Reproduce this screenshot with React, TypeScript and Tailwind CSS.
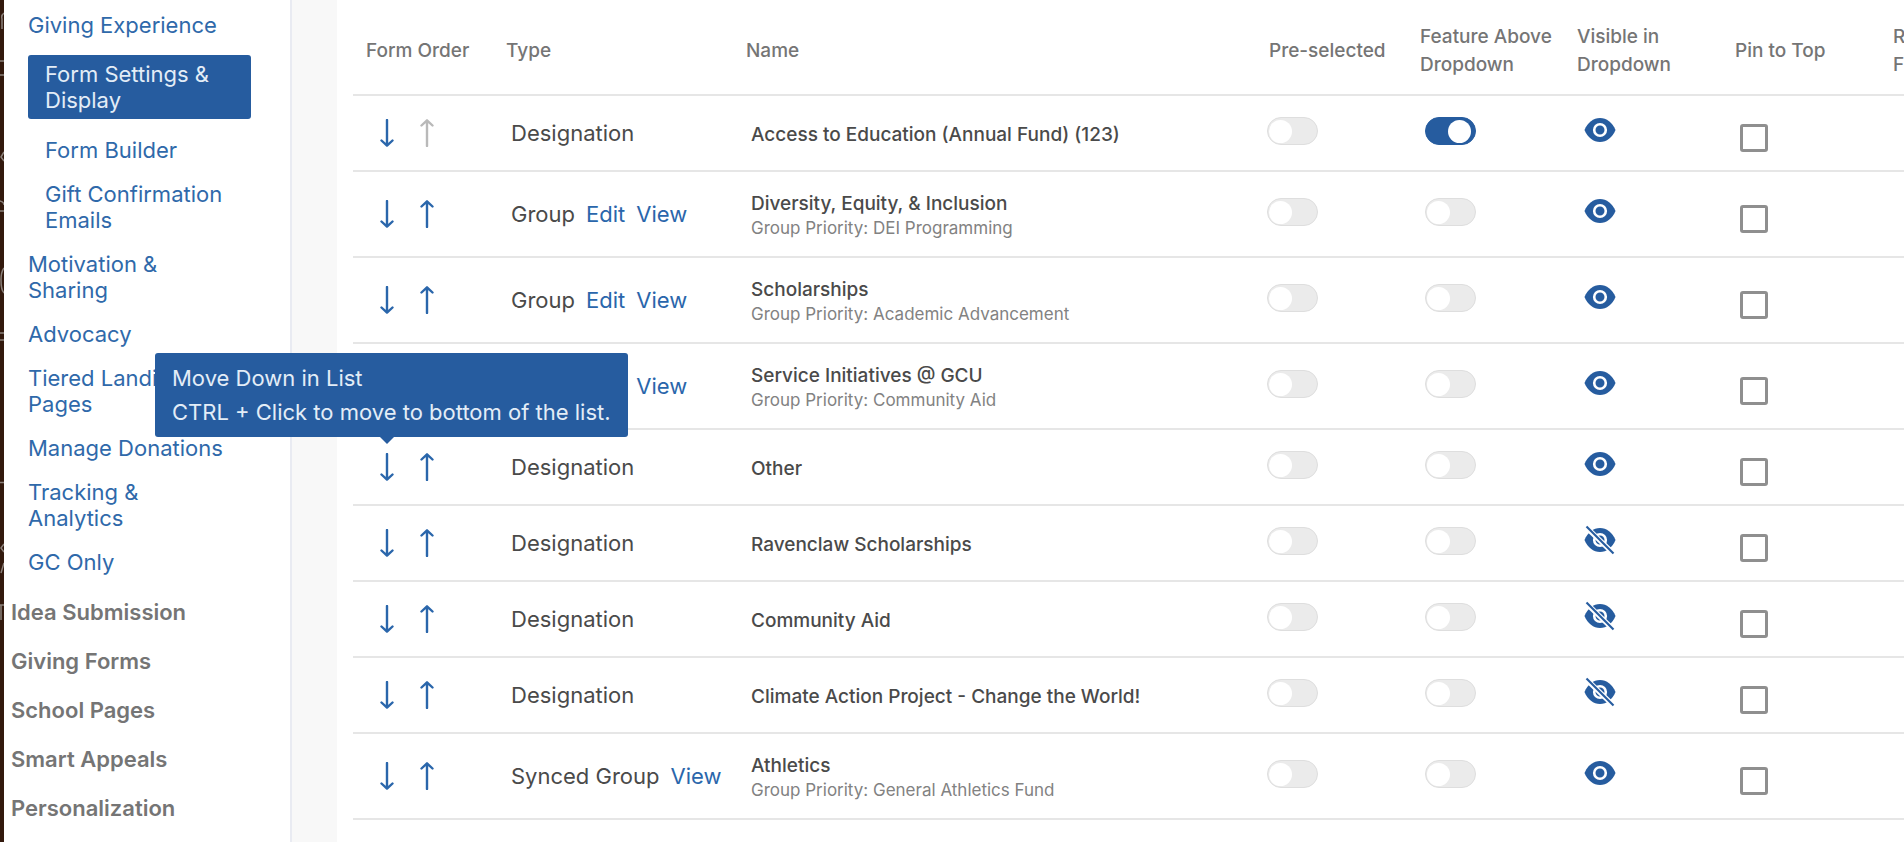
import { useState } from "react";

const rows = [
  { type: "Designation", links: [], name: "Access to Education (Annual Fund) (123)", featured: true, visible: true },
  { type: "Group", links: ["Edit", "View"], name: "Diversity, Equity, & Inclusion", priority: "DEI Programming", visible: true },
  { type: "Group", links: ["Edit", "View"], name: "Scholarships", priority: "Academic Advancement", visible: true },
  { type: "Group", links: ["Edit", "View"], name: "Service Initiatives @ GCU", priority: "Community Aid", visible: true },
  { type: "Designation", links: [], name: "Other", visible: true, tooltip: true },
  { type: "Designation", links: [], name: "Ravenclaw Scholarships", visible: false },
  { type: "Designation", links: [], name: "Community Aid", visible: false },
  { type: "Designation", links: [], name: "Climate Action Project - Change the World!", visible: false },
  { type: "Synced Group", links: ["View"], name: "Athletics", priority: "General Athletics Fund", visible: true },
];

const sections = ["Idea Submission", "Giving Forms", "School Pages", "Smart Appeals", "Personalization"];

function Arrow({ up = false }: { up?: boolean }) {
  return (
    <svg width="14" height="28" viewBox="0 0 14 28" fill="none" stroke="currentColor" strokeWidth="2.4" strokeLinecap="round" strokeLinejoin="round" className={up ? "rotate-180" : ""}>
      <path d="M7 1V26.5M1.5 21.5L7 26.7L12.5 21.5" />
    </svg>
  );
}

function Eye({ off = false }: { off?: boolean }) {
  return (
    <svg width="32" height="30" viewBox="0 0 32 30" fill="none">
      <path d="M0.5 15C3.5 7.5 9.5 3 16 3S28.500 7.500 31.500 15C28.500 22.500 22.500 27 16 27S3.500 22.500 0.500 15Z" fill="#265c9f" />
      <circle cx="16" cy="15" r="5.800" stroke="white" strokeWidth="2.600" />
      {off && (
        <>
          <path d="M1 1L30 29" stroke="white" strokeWidth="5.200" />
          <path d="M2.500 1.500L29.500 28.500" stroke="#265c9f" strokeWidth="2.200" />
        </>
      )}
    </svg>
  );
}

function Toggle({ label, defaultOn = false }: { label: string; defaultOn?: boolean }) {
  const [on, setOn] = useState(defaultOn);
  return (
    <button
      type="button"
      role="switch"
      aria-checked={on}
      aria-label={label}
      onClick={() => setOn(!on)}
      className={`flex h-7 w-[51px] items-center rounded-full border ${on ? "justify-end border-[#265c9f] bg-[#265c9f] pr-1" : "justify-start border-[#dedede] bg-[#ebebeb] pl-px"}`}
    >
      <span className="size-[23px] rounded-full bg-white" />
    </button>
  );
}

function SideLink({ text }: { text: string }) {
  return (
    <li>
      <a href="#" className="block">{text}</a>
    </li>
  );
}

// sliver of the dark page that shows left of the panel
function EdgeStrip() {
  return (
    <div className="w-1 shrink-0 overflow-hidden bg-[#32190d]">
      <svg width="4" height="842" viewBox="0 0 4 842" fill="none" stroke="#8b817b" strokeWidth="1.500">
        <path d="M4 13Q1 15 2 19V29M0 61H4M0 75H4M4 152L1 157L4 161M0 201Q4 202 4 205M0 211H4M4 268Q1 272 1 280Q1 290 4 293M0 333H4M0 340H4M0 482.500H4M4 544L1 548L4 552M4 563L1 573M0 605H4M1 605V620" />
      </svg>
    </div>
  );
}

function Sidebar() {
  return (
    <nav className="w-[288px] shrink-0 border-r-2 border-[#e9ebf2] bg-white pt-3 text-[22px] leading-[26px]">
      <ul className="flex w-[223px] flex-col gap-[18px] ml-6 text-[#2f69aa]">
        <SideLink text="Giving Experience" />
        <li>
          <a href="#" className="-mt-px block rounded-[3px] bg-[#265c9f] px-[17px] py-[6px] text-[#e3edf7]">
            Form Settings &<br />Display
          </a>
        </li>
        <li className="pl-[17px]">
          <ul className="flex flex-col gap-[18px]">
            <SideLink text="Form Builder" />
            <SideLink text="Gift Confirmation Emails" />
          </ul>
        </li>
        <li><a href="#">Motivation &<br />Sharing</a></li>
        <SideLink text="Advocacy" />
        <li><a href="#">Tiered Landing<br />Pages</a></li>
        <SideLink text="Manage Donations" />
        <li><a href="#">Tracking &<br />Analytics</a></li>
        <SideLink text="GC Only" />
      </ul>
      <ul className="mt-6 ml-[7px] flex flex-col gap-[23px] font-semibold text-[#757575]">
        {sections.map((s) => (
          <li key={s}>
            <a href="#">{s}</a>
          </li>
        ))}
      </ul>
    </nav>
  );
}

export default function App() {
  return (
    <div className="flex overflow-hidden bg-white font-['Inter','Liberation_Sans',sans-serif]">
      <EdgeStrip />
      <Sidebar />
      <main className="min-w-0 flex-1 border-l-[45px] border-[#f8f8f8] pb-5 pl-4">
        <table className="w-[1700px] table-fixed border-collapse text-left text-[#4a4a4a]">
          <colgroup>
            <col className="w-[140px]" />
            <col className="w-[240px]" />
            <col className="w-[523px]" />
            <col className="w-[151px]" />
            <col className="w-[157px]" />
            <col className="w-[158px]" />
            <col className="w-[158px]" />
            <col />
          </colgroup>
          <thead>
            <tr className="h-[95px] border-b-2 border-[#e6e6e6] text-[19px] leading-7 text-[#757575] [&>th]:pl-[13px] [&>th]:pt-2 [&>th]:font-medium">
              <th>Form Order</th>
              <th>Type</th>
              <th>Name</th>
              <th>Pre-selected</th>
              <th>Feature Above<br />Dropdown</th>
              <th>Visible in<br />Dropdown</th>
              <th>Pin to Top</th>
              <th>Required<br />Field</th>
            </tr>
          </thead>
          <tbody>
            {rows.map((row, i) => (
              <tr key={row.name} className={`border-b-2 border-[#e6e6e6] ${row.priority ? "h-[86px]" : "h-[76px]"}`}>
                <td className="pl-[27px]">
                  <div className="flex gap-[26px] text-[#2a66ab]">
                    <div className="relative flex">
                      <button type="button" aria-label={`Move ${row.name} down`}>
                        <Arrow />
                      </button>
                      {row.tooltip && (
                        <div role="tooltip" className="absolute bottom-[44px] left-[-225px] z-10 rounded-[3px] bg-[#265c9f] px-[17px] py-2 text-[22px] leading-[34px] whitespace-nowrap text-[#e3edf7]">
                          Move Down in List<br />
                          CTRL + Click to move to bottom of the list.
                          <span className="absolute top-full left-[225px] border-x-[7px] border-t-[7px] border-x-transparent border-t-[#265c9f]" />
                        </div>
                      )}
                    </div>
                    <button type="button" aria-label={`Move ${row.name} up`} disabled={i === 0} className="disabled:text-[#b9b9b9]">
                      <Arrow up />
                    </button>
                  </div>
                </td>
                <td className="pl-[18px] text-[22px] whitespace-nowrap">
                  <div className="flex gap-[11px]">
                    {row.type}
                    {row.links.map((l) => (
                      <a key={l} href="#" className="text-[#2a66ab]">{l}</a>
                    ))}
                  </div>
                </td>
                <td className="pt-[3px] pl-[18px]">
                  <div className="text-[19px] leading-6 font-medium">{row.name}</div>
                  {row.priority && <div className="text-[17px] leading-6 text-[#828282]">Group Priority: {row.priority}</div>}
                </td>
                <td className="pb-1 pl-[11px]">
                  <Toggle label={`Pre-select ${row.name}`} />
                </td>
                <td className="pb-1 pl-[18px]">
                  <Toggle label={`Feature ${row.name} above dropdown`} defaultOn={row.featured} />
                </td>
                <td className="pb-[7px] pl-5">
                  <button type="button" aria-label={`Visibility of ${row.name}`} className="block">
                    <Eye off={!row.visible} />
                  </button>
                </td>
                <td className="pt-[10px] pl-[18px]">
                  <input type="checkbox" aria-label={`Pin ${row.name} to top`} className="block size-7 appearance-none rounded-[3px] border-[3px] border-[#8f8f8f] checked:bg-[#265c9f]" />
                </td>
                <td />
              </tr>
            ))}
          </tbody>
        </table>
      </main>
    </div>
  );
}
